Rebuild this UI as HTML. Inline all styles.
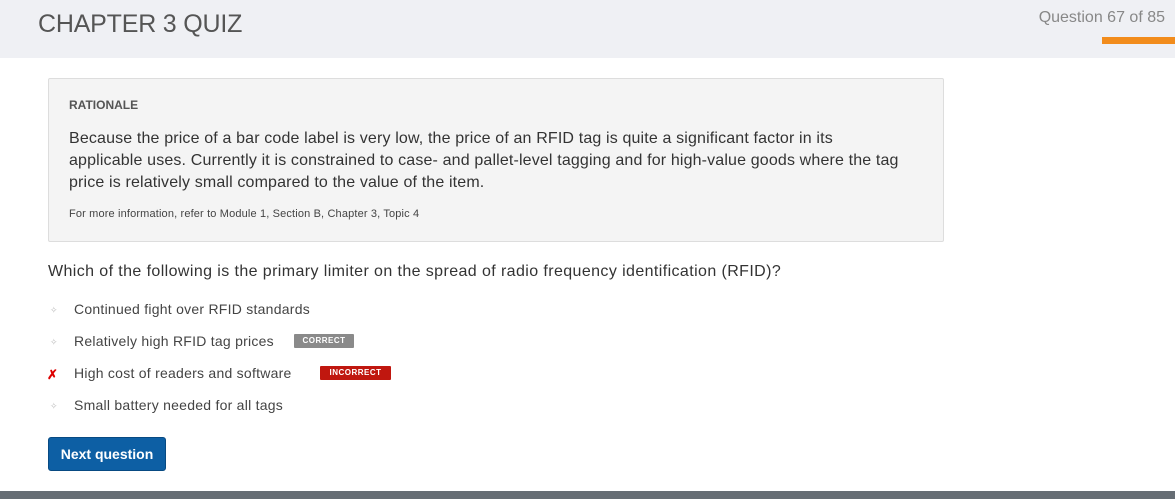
<!DOCTYPE html>
<html><head><style>
body{margin:0;width:1175px;height:499px;background:#fff;font-family:"Liberation Sans",sans-serif;position:relative;overflow:hidden;color:#333}
.hdr{position:absolute;left:0;top:0;width:1175px;height:58px;background:#eff0f4}
.title{position:absolute;left:38px;top:10px;font-size:25px;color:#555;letter-spacing:-0.2px}
.qn{position:absolute;right:10px;top:9px;font-size:16px;color:#888}
.bar{position:absolute;left:1102px;top:37px;width:73px;height:7px;background:#f28c1c}
.box{position:absolute;left:48px;top:78px;width:894px;height:162px;background:#f4f4f4;border:1px solid #ddd;border-radius:2px}
.rl{position:absolute;left:20px;top:19px;font-size:12px;font-weight:bold;color:#555}
.rt{position:absolute;left:20px;top:49px;width:870px;font-size:16px;line-height:22px;color:#333;letter-spacing:0.15px;white-space:nowrap}
.mi{position:absolute;left:20px;top:129px;font-size:11px;color:#444;letter-spacing:0.15px}
.q{position:absolute;left:48px;top:263px;font-size:16px;color:#333;letter-spacing:0.4px}
.opt{position:absolute;left:74px;font-size:14px;color:#444;letter-spacing:0.25px}
.dot{position:absolute;left:50px;font-size:9px;color:#bbb}
.tag{position:absolute;height:14px;font-size:8px;font-weight:bold;color:#fff;text-align:center;line-height:14px;letter-spacing:0.5px;border-radius:1px}
.btn{position:absolute;left:48px;top:437px;width:116px;height:32px;background:#0d5fa4;border:1px solid #084a82;border-radius:3px;color:#fff;font-size:14px;font-weight:bold;line-height:32px;text-align:center}
.foot{position:absolute;left:0;top:491px;width:1175px;height:8px;background:#666d74}
</style></head><body>
<div class="hdr"><div class="title">CHAPTER 3 QUIZ</div><div class="qn">Question 67 of 85</div><div class="bar"></div></div>
<div class="box"><div class="rl">RATIONALE</div>
<div class="rt">Because the price of a bar code label is very low, the price of an RFID tag is quite a significant factor in its<br>applicable uses. Currently it is constrained to case- and pallet-level tagging and for high-value goods where the tag<br>price is relatively small compared to the value of the item.</div>
<div class="mi">For more information, refer to Module 1, Section B, Chapter 3, Topic 4</div></div>
<div class="q">Which of the following is the primary limiter on the spread of radio frequency identification (RFID)?</div>
<div class="dot" style="top:305px">✧</div><div class="opt" style="top:301px">Continued fight over RFID standards</div>
<div class="dot" style="top:337px">✧</div><div class="opt" style="top:333px">Relatively high RFID tag prices</div>
<div class="tag" style="left:294px;top:334px;width:60px;background:#8a8a8a">CORRECT</div>
<div style="position:absolute;left:47px;top:367px;font-size:13px;color:#d00;font-weight:bold">✗</div><div class="opt" style="top:365px">High cost of readers and software</div>
<div class="tag" style="left:320px;top:366px;width:71px;background:#c0170f">INCORRECT</div>
<div class="dot" style="top:401px">✧</div><div class="opt" style="top:397px">Small battery needed for all tags</div>
<div class="btn">Next question</div>
<div class="foot"></div>
</body></html>
